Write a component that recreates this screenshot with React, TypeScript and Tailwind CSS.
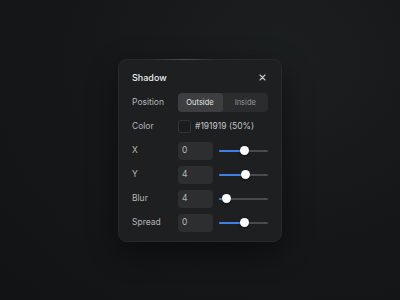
import React from "react";

function Slider({ pct }: { pct: number }) {
  return (
    <div className="relative h-[10px] flex-1 flex items-center">
      <div className="h-[2px] w-full rounded-full bg-[#4a4b4c]" />
      <div className="absolute left-0 h-[2px] rounded-full bg-[#3f7fe6]" style={{ width: `${pct}%` }} />
      <div
        className="absolute h-[9px] w-[9px] rounded-full bg-white shadow-[0_1px_2px_rgba(0,0,0,0.5)]"
        style={{ left: `calc(${pct}% - 4.5px)` }}
      />
    </div>
  );
}

function NumRow({ label, value, pct }: { label: string; value: string; pct: number }) {
  return (
    <div className="flex h-[18px] items-center">
      <div className="w-[45.5px] text-[8.5px] text-[#b4b6b7]">{label}</div>
      <div className="flex h-[18px] w-[35px] items-center rounded-[4px] bg-[#2c2e2f] pl-[4.5px] text-[8.5px] text-[#b9bbbc]">
        {value}
      </div>
      <div className="ml-[6px] flex flex-1">
        <Slider pct={pct} />
      </div>
    </div>
  );
}

export default function App() {
  return (
    <div
      className="flex h-[300px] w-[400px] items-center justify-center bg-[#141617] bg-[radial-gradient(ellipse_at_70%_20%,#1c1f20_0%,#151718_50%,#121314_100%)]"
      style={{ fontFamily: "Inter, 'Noto Sans', sans-serif" }}
    >
      <div className="relative h-[183px] w-[164px] rounded-[9px] border border-[#28292a] bg-[#1d1f20] px-[13px] pt-[12px] shadow-[0_10px_30px_rgba(0,0,0,0.45)]">
        <div className="absolute -top-px left-[30px] h-px w-[70px] bg-[linear-gradient(90deg,transparent,#4a4d4e,transparent)]" />
        <div className="flex h-[12px] items-center justify-between">
          <span className="text-[9px] font-medium text-[#eceeef]">Shadow</span>
          <svg width="7" height="7" viewBox="0 0 7 7" className="mr-[2px]">
            <path d="M1 1L6 6M6 1L1 6" stroke="#c9cbcc" strokeWidth="1.1" strokeLinecap="round" />
          </svg>
        </div>
        <div className="mt-[9.5px] flex flex-col gap-[6px]">
          <div className="flex h-[18.5px] items-center">
            <div className="w-[45.5px] text-[8.5px] text-[#b4b6b7]">Position</div>
            <div className="flex h-[18.5px] flex-1 rounded-[4px] bg-[#2a2c2d]">
              <div className="flex w-[45px] items-center justify-center rounded-[4px] bg-[#3c3e3f] text-[7.5px] text-[#e4e6e7]">
                Outside
              </div>
              <div className="flex flex-1 items-center justify-center text-[7.5px] text-[#96989a]">Inside</div>
            </div>
          </div>
          <div className="flex h-[18px] items-center">
            <div className="w-[45.5px] text-[8.5px] text-[#b4b6b7]">Color</div>
            <div className="h-[13px] w-[13px] rounded-[3px] border border-[#333536] bg-[#1b1c1d]" />
            <div className="ml-[4.5px] text-[8.5px] text-[#c4c6c7]">#191919 (50%)</div>
          </div>
          <NumRow label="X" value="0" pct={52} />
          <NumRow label="Y" value="4" pct={55} />
          <NumRow label="Blur" value="4" pct={16} />
          <NumRow label="Spread" value="0" pct={52} />
        </div>
      </div>
    </div>
  );
}
